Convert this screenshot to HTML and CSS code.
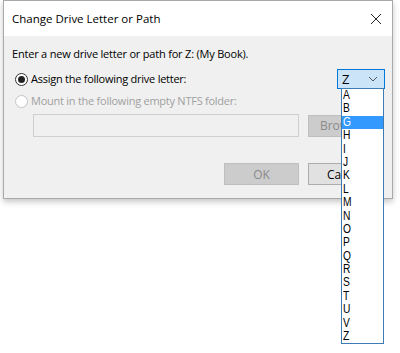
FILE: index.html
```html
<!DOCTYPE html>
<html>
<head>
<meta charset="utf-8">
<link rel="stylesheet" href="styles.css">
</head>
<body>
<div class="dialog">
  <div class="titlebar">
    <span class="title">Change Drive Letter or Path</span>
    <svg class="close" width="12" height="12" viewBox="0 0 12 12"><path d="M1 1L11 11M11 1L1 11" stroke="#222" stroke-width="1"/></svg>
  </div>
  <div class="content">
    <div class="prompt">Enter a new drive letter or path for Z: (My Book).</div>
    <div class="row assign">
      <div class="option"><span class="radio checked"></span><span>Assign the following drive letter:</span></div>
      <div class="combo">
        <span class="value">Z</span>
        <svg class="chev" width="10" height="6" viewBox="0 0 10 6"><path d="M1 1L5 5L9 1" fill="none" stroke="#555" stroke-width="1"/></svg>
      </div>
    </div>
    <div class="option disabled mount"><span class="radio"></span><span>Mount in the following empty NTFS folder:</span></div>
    <div class="row path">
      <div class="field"></div>
      <button class="btn off">Browse...</button>
    </div>
    <div class="row actions">
      <button class="btn off">OK</button>
      <button class="btn">Cancel</button>
    </div>
  </div>
</div>
<ul class="droplist">
  <li><span>A</span></li><li><span>B</span></li><li class="sel"><span>G</span></li><li><span>H</span></li><li><span>I</span></li><li><span>J</span></li><li><span>K</span></li><li><span>L</span></li><li><span>M</span></li><li><span>N</span></li><li><span>O</span></li><li><span>P</span></li><li><span>Q</span></li><li><span>R</span></li><li><span>S</span></li><li><span>T</span></li><li><span>U</span></li><li><span>V</span></li><li><span>Z</span></li>
</ul>
</body>
</html>
```
FILE: styles.css
```css
html, body {
  margin: 0;
  background: #fff;
}
html {
  min-height: 353px;
}
body {
  font-family: "Open Sans", "Noto Sans", sans-serif;
  font-size: 11px;
  color: #000;
  padding: 0 0 0 3px;
  min-height: 353px;
  position: relative;
}
.dialog {
  width: 388px;
  border: 1px solid #a9a9a9;
  background: #f0f0f0;
  box-shadow: 0 3px 6px rgba(0,0,0,0.22);
}
.titlebar {
  height: 35px;
  background: #fff;
  display: flex;
  align-items: center;
  justify-content: space-between;
  padding: 0 10px 0 8px;
}
.title {
  font-size: 11.5px;
  color: #000;
}
.close {
  display: block;
}
.content {
  padding: 10px 9px 13px 8px;
  display: flex;
  flex-direction: column;
}
.prompt {
  line-height: 16px;
  letter-spacing: -0.2px;
}
.row {
  display: flex;
  align-items: center;
}
.assign {
  margin-top: 7px;
  justify-content: space-between;
  height: 20px;
}
.option {
  display: flex;
  align-items: center;
  line-height: 16px;
  padding-left: 3px;
  letter-spacing: -0.25px;
}
.radio {
  width: 11px;
  height: 11px;
  border: 1px solid #333;
  border-radius: 50%;
  background: #fff;
  margin-right: 3px;
  position: relative;
  flex: none;
}
.radio.checked::after {
  content: "";
  position: absolute;
  left: 2px;
  top: 2px;
  width: 7px;
  height: 7px;
  border-radius: 50%;
  background: #222;
}
.disabled {
  color: #a0a0a0;
}
.disabled .radio {
  border-color: #c4c4c4;
}
.mount {
  margin-top: 4px;
}
.combo {
  height: 18px;
  width: 36px;
  border: 1px solid #0078d7;
  background: #cce4f7;
  margin-right: -2px;
  display: flex;
  align-items: center;
  justify-content: space-between;
  padding: 0 6px 0 4px;
  font-size: 13px;
}
.chev {
  display: block;
}
.droplist {
  position: absolute;
  left: 341px;
  top: 88px;
  width: 41px;
  margin: 0;
  padding: 0;
  list-style: none;
  background: #fff;
  border: 1px solid #3d7bb5;
  font-family: "Liberation Sans", Arial, sans-serif;
  font-size: 12.5px;
  z-index: 5;
}
.droplist li {
  height: 13.4px;
  line-height: 13.4px;
  padding-left: 1px;
  overflow: hidden;
}
.droplist li span {
  display: inline-block;
  line-height: 12px;
  transform: scaleX(0.82);
  transform-origin: left center;
}
.droplist li.sel {
  background: #3399ff;
  color: #fff;
}
.path {
  margin-top: 5px;
  margin-left: 21px;
  gap: 9px;
}
.field {
  width: 264px;
  height: 21px;
  border: 1px solid #cfcfcf;
  background: #f0f0f0;
}
.btn {
  width: 75px;
  height: 22px;
  font-family: "Open Sans", sans-serif;
  font-size: 12px;
  border: 1px solid #adadad;
  background: #e1e1e1;
  color: #000;
  padding: 0;
  margin: 0;
}
.btn.off {
  background: #cccccc;
  border-color: #bfbfbf;
  color: #8a8a8a;
}
.actions {
  margin-top: 26px;
  justify-content: flex-end;
  gap: 9px;
}
```
